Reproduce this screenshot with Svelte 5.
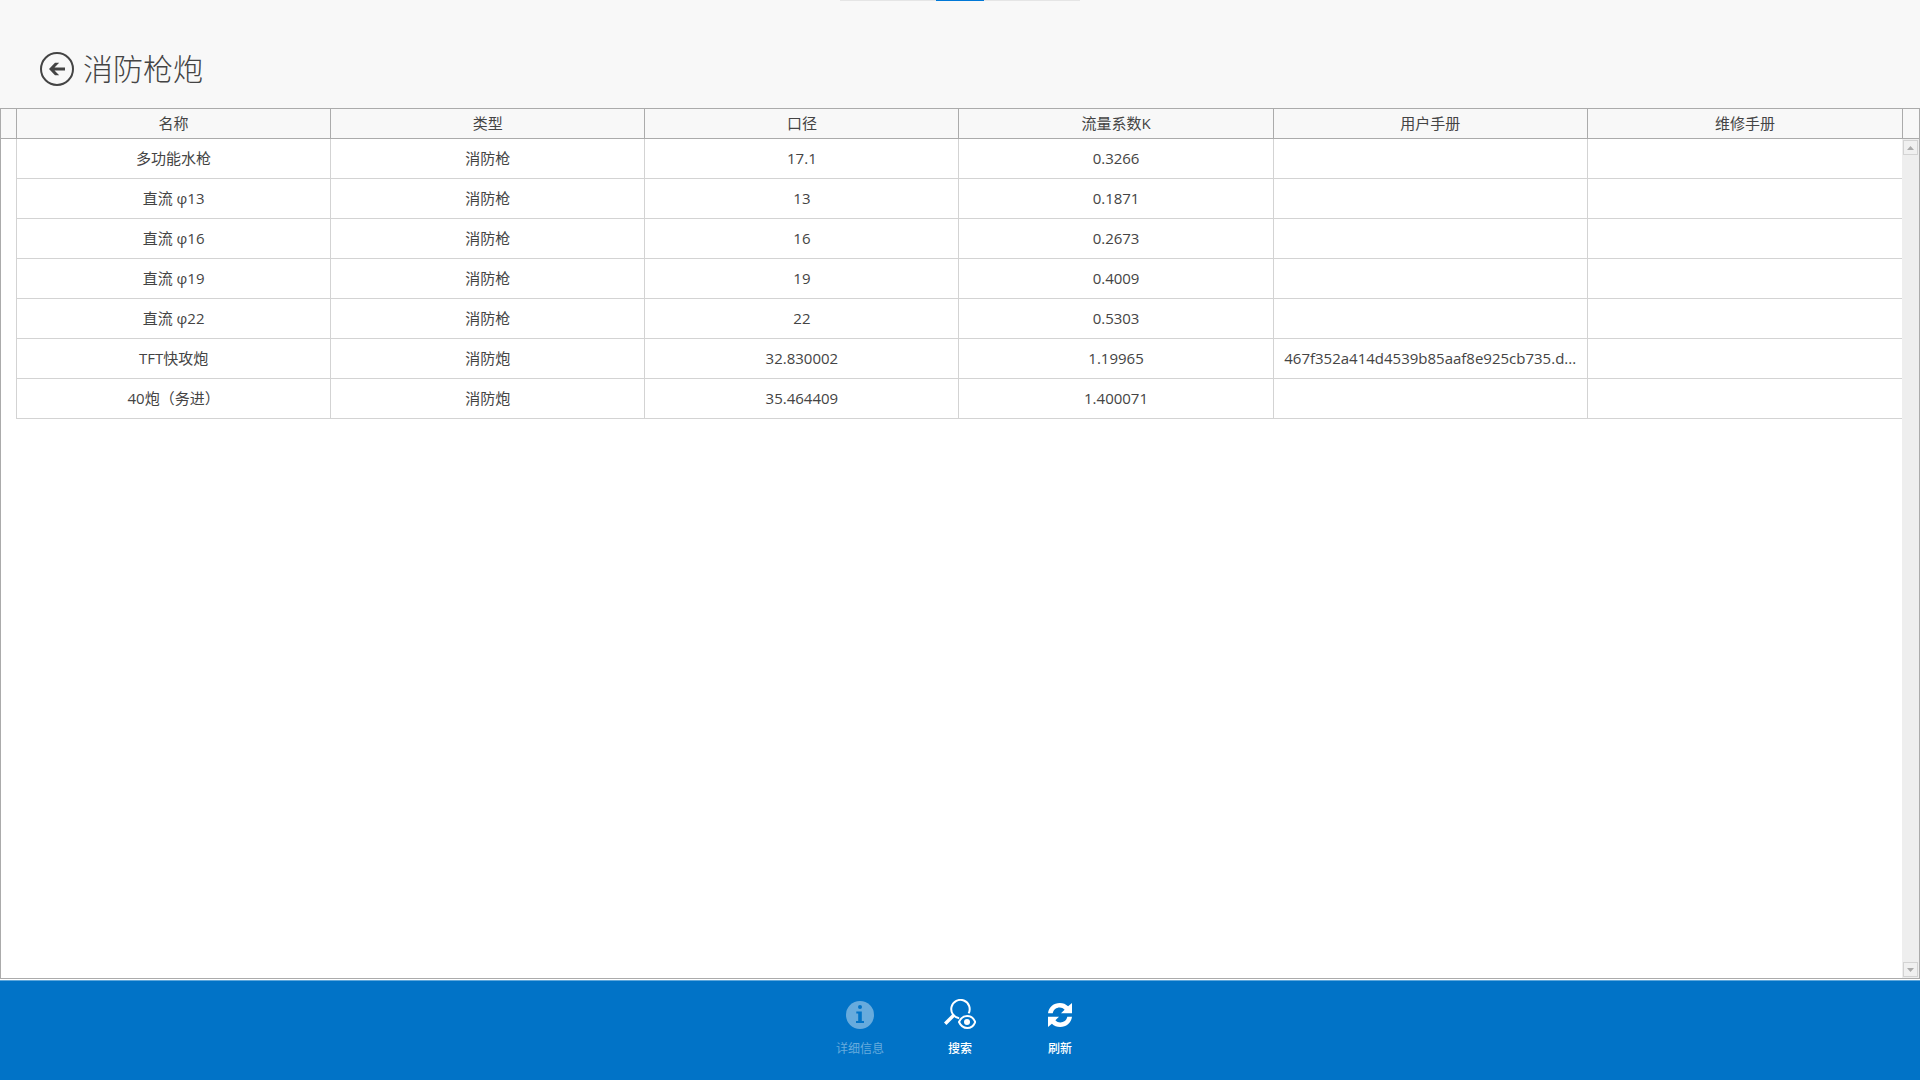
<script>
	const columns = ['名称', '类型', '口径', '流量系数K', '用户手册', '维修手册'];

	let rows = [
		{ name: '多功能水枪', type: '消防枪', caliber: '17.1', k: '0.3266', manual: '', repair: '' },
		{ name: '直流 φ13', type: '消防枪', caliber: '13', k: '0.1871', manual: '', repair: '' },
		{ name: '直流 φ16', type: '消防枪', caliber: '16', k: '0.2673', manual: '', repair: '' },
		{ name: '直流 φ19', type: '消防枪', caliber: '19', k: '0.4009', manual: '', repair: '' },
		{ name: '直流 φ22', type: '消防枪', caliber: '22', k: '0.5303', manual: '', repair: '' },
		{
			name: 'TFT快攻炮',
			type: '消防炮',
			caliber: '32.830002',
			k: '1.19965',
			manual: '467f352a414d4539b85aaf8e925cb735.d...',
			repair: ''
		},
		{ name: '40炮（务进）', type: '消防炮', caliber: '35.464409', k: '1.400071', manual: '', repair: '' }
	];
</script>

<div class="page">
	<div class="pull"><div class="pull__handle"></div></div>
	<header class="title-bar">
		<button class="back" aria-label="返回">
			<svg width="34" height="34" viewBox="0 0 34 34">
				<circle cx="17" cy="17" r="16" fill="none" stroke="#444" stroke-width="2" />
				<path d="M9 17l6-6.300h4.200L14.500 15.500h10.500v3H14.500l4.700 4.800h-4.200z" fill="#444" />
			</svg>
		</button>
		<h1>消防枪炮</h1>
	</header>

	<main class="grid">
		<div class="grid__rows">
			<table>
				<thead>
					<tr>
						<th class="indicator"></th>
						{#each columns as column}
							<th>{column}</th>
						{/each}
					</tr>
				</thead>
				<tbody>
					{#each rows as row}
						<tr>
							<td class="indicator"></td>
							<td>{row.name}</td>
							<td>{row.type}</td>
							<td>{row.caliber}</td>
							<td>{row.k}</td>
							<td>{row.manual}</td>
							<td>{row.repair}</td>
						</tr>
					{/each}
				</tbody>
			</table>
		</div>
		<div class="scroll">
			<div class="scroll__corner"></div>
			<div class="scroll__track">
				<button aria-label="向上滚动">
					<svg width="7" height="4" viewBox="0 0 7 4"><path d="M3.500 0L7 4H0z" fill="#ababab" /></svg>
				</button>
				<button aria-label="向下滚动">
					<svg width="7" height="4" viewBox="0 0 7 4"><path d="M0 0h7L3.500 4z" fill="#ababab" /></svg>
				</button>
			</div>
		</div>
	</main>

	<footer class="app-bar">
		<button class="app-bar__item" disabled>
			<svg width="32" height="32" viewBox="0 0 32 32">
				<circle cx="16" cy="16" r="14" fill="#67abdd" />
				<circle cx="16" cy="8" r="2" fill="#0173c7" />
				<path d="M12.300 12.400h5.500v9.600h2.200v2h-8v-2h2.200v-7.600h-1.900z" fill="#0173c7" />
			</svg>
			<span>详细信息</span>
		</button>
		<button class="app-bar__item">
			<svg width="32" height="32" viewBox="0 0 32 32" fill="none" stroke="#fff">
				<path d="M24.600 14.400A9.200 9.200 0 1 0 15.200 19.200" stroke-width="2" />
				<path d="M10.200 15.800l-9 8.900" stroke-width="3.500" />
				<path
					d="M15 23c1.800-4 4.800-6 8.200-6s6.400 2 8 6c-1.600 4-4.600 6-8 6s-6.400-2-8.200-6z"
					stroke-width="2"
				/>
				<circle cx="23" cy="23" r="3" fill="#fff" stroke="none" />
			</svg>
			<span>搜索</span>
		</button>
		<button class="app-bar__item">
			<svg width="32" height="32" viewBox="0 0 32 32" fill="#fff">
				<path d="M4 14.200C4.800 7.800 9.800 4 15.800 4c3.400 0 6 1.200 8.300 3.300L28 4v10.200H17l3.600-3.500C19.200 9.200 17.600 8.500 15.700 8.500c-3.400 0-6.200 2.100-7 5.700z" />
				<path d="M28 17.800C27.200 24.200 22.200 28 16.200 28c-3.400 0-6-1.200-8.300-3.300L4 28V17.800h11l-3.600 3.500c1.400 1.500 3 2.200 4.900 2.200 3.400 0 6.200-2.100 7-5.700z" />
			</svg>
			<span>刷新</span>
		</button>
	</footer>
</div>

<style>
	:global(body) {
		margin: 0;
		background: #f8f8f8;
	}
	.page {
		display: flex;
		flex-direction: column;
		min-height: 100vh;
		color: #444;
		font-family: 'Open Sans', 'Noto Sans CJK SC', sans-serif;
		font-size: 15px;
	}
	button {
		padding: 0;
		border: none;
		background: none;
		font-family: inherit;
	}
	svg {
		display: block;
	}

	.pull {
		align-self: center;
		width: 240px;
		background: #e5e5e5;
	}
	.pull__handle {
		width: 48px;
		height: 1px;
		margin: 0 auto;
		background: #0078d7;
	}

	.title-bar {
		display: flex;
		align-items: center;
		gap: 9px;
		height: 78px;
		padding: 29px 40px 0;
	}
	h1 {
		margin: 0;
		padding-bottom: 4px;
		font-family: 'Noto Sans CJK SC', sans-serif;
		font-size: 30px;
		font-weight: 300;
		line-height: 40px;
	}

	.grid {
		display: flex;
		flex: 1;
		border: 1px solid #ababab;
		background: #fff;
	}
	.grid__rows {
		flex: 1;
		min-width: 0;
	}
	table {
		width: 100%;
		border-collapse: separate;
		border-spacing: 0;
		table-layout: fixed;
	}
	th,
	td {
		box-sizing: border-box;
		height: 40px;
		padding: 0 6px 2px;
		border-right: 1px solid #d3d3d3;
		border-bottom: 1px solid #d3d3d3;
		font-weight: 400;
		line-height: 20px;
		text-align: center;
		white-space: nowrap;
		overflow: hidden;
		text-overflow: ellipsis;
	}
	th {
		height: 30px;
		border-color: #ababab;
		background: #f8f8f8;
	}
	th:last-child,
	td:last-child {
		border-right: none;
	}
	.indicator {
		width: 16px;
		padding: 0;
	}
	td.indicator {
		border-bottom: none;
	}

	.scroll {
		display: flex;
		flex-direction: column;
		width: 17px;
	}
	.scroll__corner {
		box-sizing: border-box;
		height: 30px;
		border-left: 1px solid #ababab;
		border-bottom: 1px solid #ababab;
		background: #f8f8f8;
	}
	.scroll__track {
		display: flex;
		flex: 1;
		flex-direction: column;
		justify-content: space-between;
		padding: 1px;
		background: #eee;
	}
	.scroll__track button {
		display: flex;
		align-items: center;
		justify-content: center;
		height: 15px;
		border: 1px solid #d3d3d3;
		background: #f0f0f0;
	}

	.app-bar {
		display: flex;
		box-sizing: border-box;
		justify-content: center;
		height: 100px;
		margin-top: 1px;
		border-top: 1px solid #5ca7dc;
		background: #0173c7;
		box-shadow: 0 -1px #fff;
	}
	.app-bar__item {
		display: flex;
		flex-direction: column;
		align-items: center;
		gap: 9px;
		width: 100px;
		padding-top: 18px;
		color: #fff;
		font-size: 12px;
		font-weight: 500;
		line-height: 18px;
	}
	.app-bar__item:disabled {
		color: #67abdd;
		font-weight: 400;
	}
</style>
